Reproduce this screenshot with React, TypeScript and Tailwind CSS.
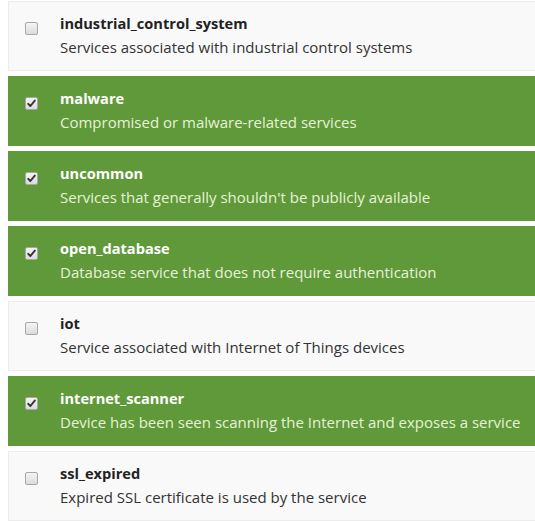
import React from "react";

type Item = { name: string; desc: string; checked: boolean };

const items: Item[] = [
  { name: "industrial_control_system", desc: "Services associated with industrial control systems", checked: false },
  { name: "malware", desc: "Compromised or malware-related services", checked: true },
  { name: "uncommon", desc: "Services that generally shouldn't be publicly available", checked: true },
  { name: "open_database", desc: "Database service that does not require authentication", checked: true },
  { name: "iot", desc: "Service associated with Internet of Things devices", checked: false },
  { name: "internet_scanner", desc: "Device has been seen scanning the Internet and exposes a service", checked: true },
  { name: "ssl_expired", desc: "Expired SSL certificate is used by the service", checked: false },
];

function Box({ checked }: { checked: boolean }) {
  return (
    <div className="w-[13px] h-[13px] rounded-[2px] border border-[#a8a8a8] bg-gradient-to-b from-[#f4f4f4] to-[#dcdcdc] flex items-center justify-center">
      {checked && (
        <svg width="9" height="9" viewBox="0 0 9 9">
          <path d="M1.2 4.8 L3.4 7 L7.8 1.6" stroke="#333" strokeWidth="1.9" fill="none" strokeLinecap="round" strokeLinejoin="round" />
        </svg>
      )}
    </div>
  );
}

export default function App() {
  return (
    <div className="w-[535px] h-[521px] overflow-hidden bg-white pt-px pl-2" style={{ fontFamily: "'Open Sans', Lato, sans-serif" }}>
      <div className="w-[560px] flex flex-col gap-[5px]">
        {items.map((it) => (
          <div
            key={it.name}
            className={
              "h-[70px] flex items-start border " +
              (it.checked ? "bg-[#5f993a] border-[#5f993a]" : "bg-[#f9f9f9] border-[#ececec]")
            }
          >
            <div className="w-[51px] pl-[16px] pt-[20px] shrink-0">
              <Box checked={it.checked} />
            </div>
            <div className="pt-[9px]">
              <div className={"text-[14.6px] font-bold leading-[24px] " + (it.checked ? "text-white" : "text-[#222]")}>
                {it.name}
              </div>
              <div className={"text-[15px] leading-[24px] " + (it.checked ? "text-[#e6f3d6]" : "text-[#333]")}>
                {it.desc}
              </div>
            </div>
          </div>
        ))}
      </div>
    </div>
  );
}
